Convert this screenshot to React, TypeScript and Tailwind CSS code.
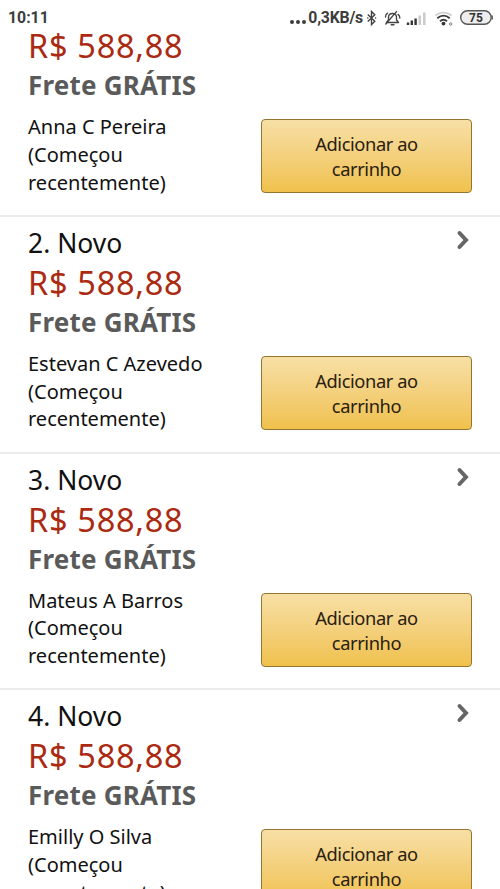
type Offer = {
  position: number;
  price: string;
  seller: string;
};

const offers: Offer[] = [
  { position: 1, price: "R$ 588,88", seller: "Anna C Pereira" },
  { position: 2, price: "R$ 588,88", seller: "Estevan C Azevedo" },
  { position: 3, price: "R$ 588,88", seller: "Mateus A Barros" },
  { position: 4, price: "R$ 588,88", seller: "Emilly O Silva" },
];

function StatusIcons() {
  return (
    <svg width="132" height="20" viewBox="0 0 132 20" fill="none" className="mt-[2px] shrink-0">
      {/* bluetooth */}
      <path d="M3.800 5.500l7 6.700-3.300 3.300V2.500l3.300 3.300-7 6.700" stroke="#444" strokeWidth="1.400" />
      <circle cx="3.800" cy="9" r="0.800" fill="#444" />
      <circle cx="11.600" cy="9" r="0.800" fill="#444" />
      {/* muted bell */}
      <path d="M22.500 13.500h12l-2-2.500V8.500c0-2.400-1.600-4-4-4s-4 1.600-4 4V11z" stroke="#444" strokeWidth="1.400" strokeLinejoin="round" />
      <path d="M27.200 15.800h2.800M21.500 8c.1-1.800.8-3 2-3.800M35.800 9c0-1.600-.6-2.800-1.800-3.600M21.800 15L32.500 2.600" stroke="#444" strokeWidth="1.400" strokeLinecap="round" />
      {/* signal */}
      <path d="M44 13.500V16M47.800 11.500V16M51.600 9.500V16" stroke="#333" strokeWidth="2.400" />
      <path d="M55.800 6.500V16M60.300 3.500V16" stroke="#ccc" strokeWidth="2.600" />
      {/* wifi */}
      <path d="M71.500 6.500c4.800-4 11.200-4 16 0" stroke="#ccc" strokeWidth="1.700" />
      <path d="M73.300 9.200c3.800-3.300 8.600-3.300 12.400 0M76 12.200c2.200-1.900 4.800-1.900 7 0" stroke="#3d3d3d" strokeWidth="2" />
      <circle cx="79.500" cy="14.600" r="1.900" fill="#333" />
      <circle cx="86.700" cy="15" r="1.200" stroke="#777" />
      {/* battery */}
      <rect x="96.700" y="1.700" width="30.500" height="13.600" rx="6.800" fill="#eee" stroke="#555" strokeWidth="1.400" />
      <path d="M128.300 6.500v4" stroke="#555" strokeWidth="1.200" />
      <text x="112" y="12.900" textAnchor="middle" fontSize="12" fontWeight="700" fontFamily="Roboto, sans-serif" fill="#333">75</text>
    </svg>
  );
}

function StatusBar() {
  return (
    <header className="flex h-[30px] shrink-0 items-center justify-between pl-2 pr-[4px] pt-[6px] font-[Roboto,sans-serif] text-[15.800px] font-bold text-[#3d3d3d]">
      <span>10:11</span>
      <div className="flex items-center">
        <div className="mr-[2px] mt-[8px] flex gap-[2.200px]">
          <i className="size-[4px] rounded-full bg-[#3d3d3d]" />
          <i className="size-[4px] rounded-full bg-[#3d3d3d]" />
          <i className="size-[4px] rounded-full bg-[#3d3d3d]" />
        </div>
        <span className="mr-[1px] tracking-[-0.200px]">0,3KB/s</span>
        <StatusIcons />
      </div>
    </header>
  );
}

function OfferRow({ offer, showTitle }: { offer: Offer; showTitle: boolean }) {
  return (
    <li className="shrink-0 border-b-2 border-[#ececec] px-7 pb-[21.800px]">
      {showTitle && (
        <div className="flex h-[46px] items-start justify-between pt-[6px]">
          <h2 className="text-[26.500px] leading-[40px] text-[#111]">{offer.position}. Novo</h2>
          <svg width="16" height="22" viewBox="0 0 16 22" fill="none" className="mt-[6px]">
            <path d="M3.500 4l6.500 7-6.500 7" stroke="#666" strokeWidth="4" strokeLinecap="round" />
          </svg>
        </div>
      )}
      <p className="text-[32.500px] leading-[40px] tracking-[0.700px] text-[#ab2a12]">{offer.price}</p>
      <p className="-mt-px text-[26px] font-bold leading-[40px] tracking-[0.200px] text-[#5a5a5a]">Frete GRÁTIS</p>
      <div className="flex justify-between">
        <p className="mt-[8px] h-[79px] w-[200px] text-[20px] leading-[27.800px] text-[#111]">
          {offer.seller}
          <br />
          (Começou
          <br />
          recentemente)
        </p>
        <button className="mt-[14px] h-[74px] w-[211px] rounded-[4px] border border-[#94752f] bg-linear-to-b from-[#f7dfa5] to-[#f0c14b] px-10 text-[18.300px] leading-[25px] tracking-[-0.400px] text-[#2a2010]">
          Adicionar ao carrinho
        </button>
      </div>
    </li>
  );
}

export default function App() {
  return (
    <div className="flex h-[889px] w-[500px] flex-col overflow-hidden bg-white font-['Noto_Sans',sans-serif]">
      <StatusBar />
      <main className="min-h-0 flex-1">
        <ul className="-mt-[4px] flex flex-col">
          {offers.map((offer, i) => (
            <OfferRow key={offer.position} offer={offer} showTitle={i > 0} />
          ))}
        </ul>
      </main>
    </div>
  );
}
